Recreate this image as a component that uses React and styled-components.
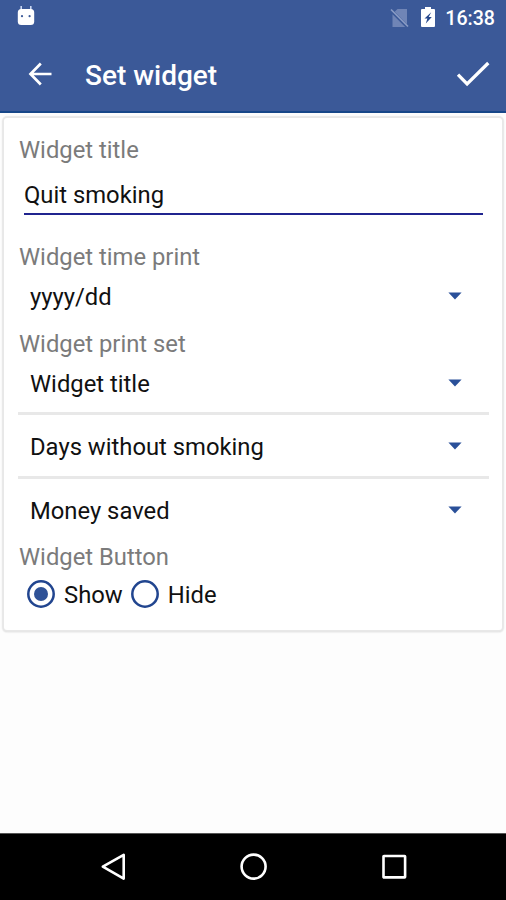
import React, { useState } from 'react';
import styled, { createGlobalStyle } from 'styled-components';

const App = () => {
  const [title, setTitle] = useState('Quit smoking');
  const [button, setButton] = useState('Show');

  return (
    <Screen>
      <GlobalStyle />
      <StatusBar>
        <Notification width="18" height="22" viewBox="0 0 18 22">
          <path d="M4.2 1v4M13.8 1v4" stroke="#c9d6f2" strokeWidth="1.6" />
          <rect x="0.8" y="4" width="16.4" height="16" rx="3.5" fill="#fff" />
          <circle cx="5" cy="11.2" r="1.1" fill="#3b5998" />
          <circle cx="12.6" cy="11.2" r="1.1" fill="#3b5998" />
        </Notification>
        <NoSim width="20" height="22" viewBox="0 0 20 22">
          <path d="M7.5 2H17v15.2L4.7 4.8zM2.5 7.2l12.7 12.7H2.5z" fill="#7085b6" />
          <path d="M1 2.5l17 17" stroke="#8c9dc6" strokeWidth="1.6" />
        </NoSim>
        <Battery width="14" height="22" viewBox="0 0 14 22">
          <path d="M4 1h6v2h3q1 0 1 1v16q0 1-1 1H1q-1 0-1-1V4q0-1 1-1h3z" fill="#fff" />
          <path d="M10.2 6.2L3.5 12.6H6.4L4.8 17.6L10.8 11H7.7z" fill="#26478c" />
        </Battery>
        <Clock>16:38</Clock>
      </StatusBar>
      <Toolbar>
        <svg width="24" height="24" viewBox="0 0 24 24">
          <path d="M12.8 1.5L2.5 12l10.3 10.5M2.5 12h21" fill="none" stroke="#fff" strokeWidth="2.7" />
        </svg>
        <Title>Set widget</Title>
        <svg width="34" height="28" viewBox="0 0 34 28">
          <path d="M2 14.7l9.1 9.3L32.3 3" fill="none" stroke="#fff" strokeWidth="3.3" />
        </svg>
      </Toolbar>
      <Content>
        <Card>
          <Label>Widget title</Label>
          <Input value={title} onChange={(e) => setTitle(e.target.value)} />
          <Label $top={26}>Widget time print</Label>
          <Select text="yyyy/dd" height={50} />
          <Label $top={7}>Widget print set</Label>
          <Select text="Widget title" height={50} />
          <Divider $top={4} />
          <Select text="Days without smoking" height={61} />
          <Divider />
          <Select text="Money saved" height={61} />
          <Label $top={1}>Widget Button</Label>
          <RadioGroup>
            {['Show', 'Hide'].map((name) => (
              <Radio key={name} onClick={() => setButton(name)}>
                <svg width="28" height="28" viewBox="0 0 28 28">
                  <circle cx="14" cy="14" r="12.7" fill="none" stroke="#21458f" strokeWidth="2.5" />
                  {button === name && <circle cx="14" cy="14" r="7" fill="#2f5297" />}
                </svg>
                <Text>{name}</Text>
              </Radio>
            ))}
          </RadioGroup>
        </Card>
      </Content>
      <NavBar>
        <svg width="28" height="30" viewBox="0 0 28 30">
          <path d="M3.8 14.6L24.7 2.8v23.8z" fill="none" stroke="#fff" strokeWidth="2.6" strokeLinejoin="round" />
        </svg>
        <svg width="28" height="30" viewBox="0 0 28 30">
          <circle cx="13.6" cy="14.6" r="12" fill="none" stroke="#fff" strokeWidth="2.6" />
        </svg>
        <svg width="28" height="30" viewBox="0 0 28 30">
          <rect x="3.5" y="4" width="21.6" height="21.4" rx="0.5" fill="none" stroke="#fff" strokeWidth="2.6" />
        </svg>
      </NavBar>
    </Screen>
  );
};

const Select = ({ text, height }) => (
  <SelectRow $height={height}>
    <Text>{text}</Text>
    <svg width="14" height="8" viewBox="0 0 14 8">
      <path d="M0.4 0.5h13.2L7 7.4z" fill="#2a5099" />
    </svg>
  </SelectRow>
);

export default App;

// Styled Components
const GlobalStyle = createGlobalStyle`
  body {
    margin: 0;
    font-family: Roboto, sans-serif;
  }
`;

const Screen = styled.div`
  display: flex;
  flex-direction: column;
  width: 506px;
  height: 900px;
  overflow: hidden;
  background-color: #fdfdfd;
`;

const StatusBar = styled.div`
  display: flex;
  align-items: center;
  box-sizing: border-box;
  height: 36px;
  padding: 0 11px 0 17px;
  background-color: #3b5998;
`;

const Notification = styled.svg`
  margin: -4px auto 0 0;
`;

const NoSim = styled.svg`
  margin-right: 11px;
`;

const Battery = styled.svg`
  margin: -2px 10px 0 0;
`;

const Clock = styled.span`
  padding-top: 2px;
  color: #fff;
  font-size: 19.6px;
  font-weight: 500;
  line-height: 34px;
`;

const Toolbar = styled.div`
  display: flex;
  align-items: center;
  box-sizing: border-box;
  height: 77px;
  padding: 0 16px 0 28px;
  border-bottom: 2px solid #174789;
  background-color: #3b5998;
`;

const Title = styled.h1`
  flex: 1;
  margin: 3px 0 0 33px;
  color: #fff;
  font-size: 28px;
  font-weight: 500;
`;

const Content = styled.div`
  flex: 1;
  padding: 5px 4px 0;
`;

const Card = styled.div`
  box-sizing: border-box;
  height: 512px;
  padding: 16px 14px 0;
  border-radius: 3px;
  background-color: #fff;
  box-shadow: 0 0 1px 2px #e8e8e8, 0 1px 2px 1px #d6d6d6;
`;

const Label = styled.div`
  height: 30px;
  margin-top: ${(props) => props.$top || 0}px;
  padding-left: 1px;
  color: #7b7b7b;
  font-size: 23.8px;
  line-height: 32px;
`;

const Input = styled.input`
  display: block;
  box-sizing: border-box;
  width: 459px;
  height: 51px;
  margin-left: 6px;
  padding: 13px 0 0;
  border: none;
  border-bottom: 2px solid #20248f;
  outline: none;
  background: none;
  color: #111;
  font-family: inherit;
  font-size: 23.8px;
`;

const SelectRow = styled.div`
  display: flex;
  align-items: center;
  justify-content: space-between;
  height: ${(props) => props.$height}px;
  padding: 0 26px 0 12px;
`;

const Text = styled.span`
  padding-top: 2px;
  color: #111;
  font-size: 23.8px;
  line-height: 30px;
`;

const Divider = styled.div`
  height: 3px;
  margin-top: ${(props) => props.$top || 0}px;
  margin-right: -1px;
  background-color: #e8e8e8;
`;

const RadioGroup = styled.div`
  display: flex;
  align-items: center;
  gap: 8px;
  height: 46px;
  padding-left: 9px;
`;

const Radio = styled.div`
  display: flex;
  align-items: center;
  gap: 9px;
  cursor: pointer;
`;

const NavBar = styled.div`
  display: flex;
  align-items: center;
  justify-content: space-between;
  box-sizing: border-box;
  height: 67px;
  padding: 0 98px 0 99px;
  border-top: 1px solid #555;
  background-color: #000;
`;
